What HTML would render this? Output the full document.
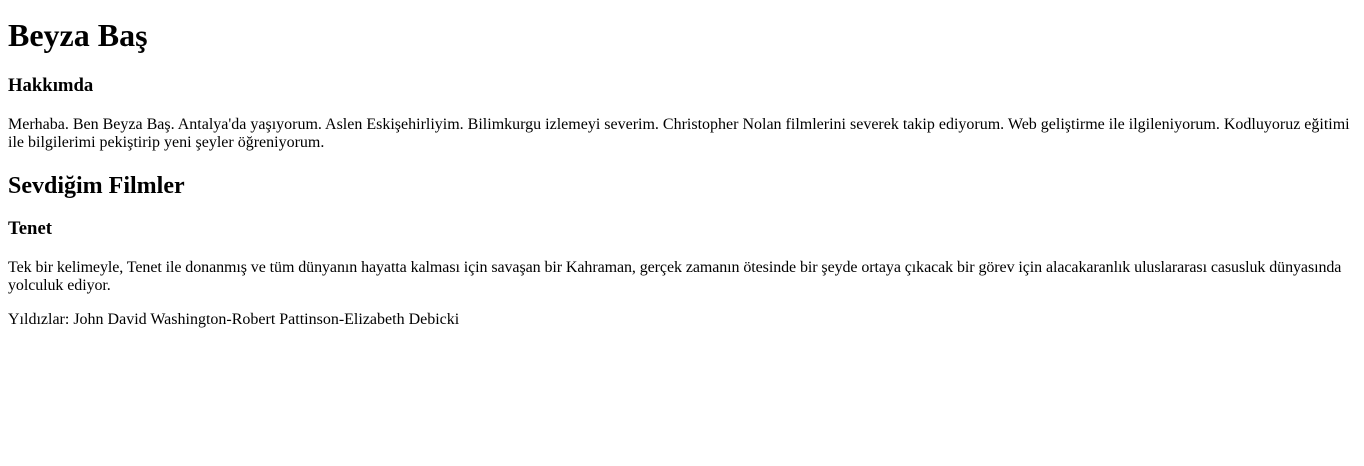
<!DOCTYPE html>
<html lang="tr">
<head>
<meta charset="utf-8">
<style>
html,body{background:#fff;}
body{margin:8px;font-family:"Liberation Serif","Times New Roman",serif;font-size:16px;color:#000;}
h1{font-size:32px;margin:0 0 21px 0;padding-top:9px;}
h2{font-size:24px;margin:21px 0 18px;}
h3{font-size:18.72px;margin:18px 0;}
h3.a{margin-bottom:19px;}
h3.b{margin-bottom:19px;}
p{margin:16px 0;line-height:18px;}
p.t{letter-spacing:-0.08px;}
</style>
</head>
<body>
<h1>Beyza Baş</h1>
<h3 class="a">Hakkımda</h3>
<p>Merhaba. Ben Beyza Baş. Antalya'da yaşıyorum. Aslen Eskişehirliyim. Bilimkurgu izlemeyi severim. Christopher Nolan filmlerini severek takip ediyorum. Web geliştirme ile ilgileniyorum. Kodluyoruz eğitimi ile bilgilerimi pekiştirip yeni şeyler öğreniyorum.</p>
<h2>Sevdiğim Filmler</h2>
<h3 class="b">Tenet</h3>
<p class="t">Tek bir kelimeyle, Tenet ile donanmış ve tüm dünyanın hayatta kalması için savaşan bir Kahraman, gerçek zamanın ötesinde bir şeyde ortaya çıkacak bir görev için alacakaranlık uluslararası casusluk dünyasında yolculuk ediyor.</p>
<p>Yıldızlar: John David Washington-Robert Pattinson-Elizabeth Debicki</p>
</body>
</html>
